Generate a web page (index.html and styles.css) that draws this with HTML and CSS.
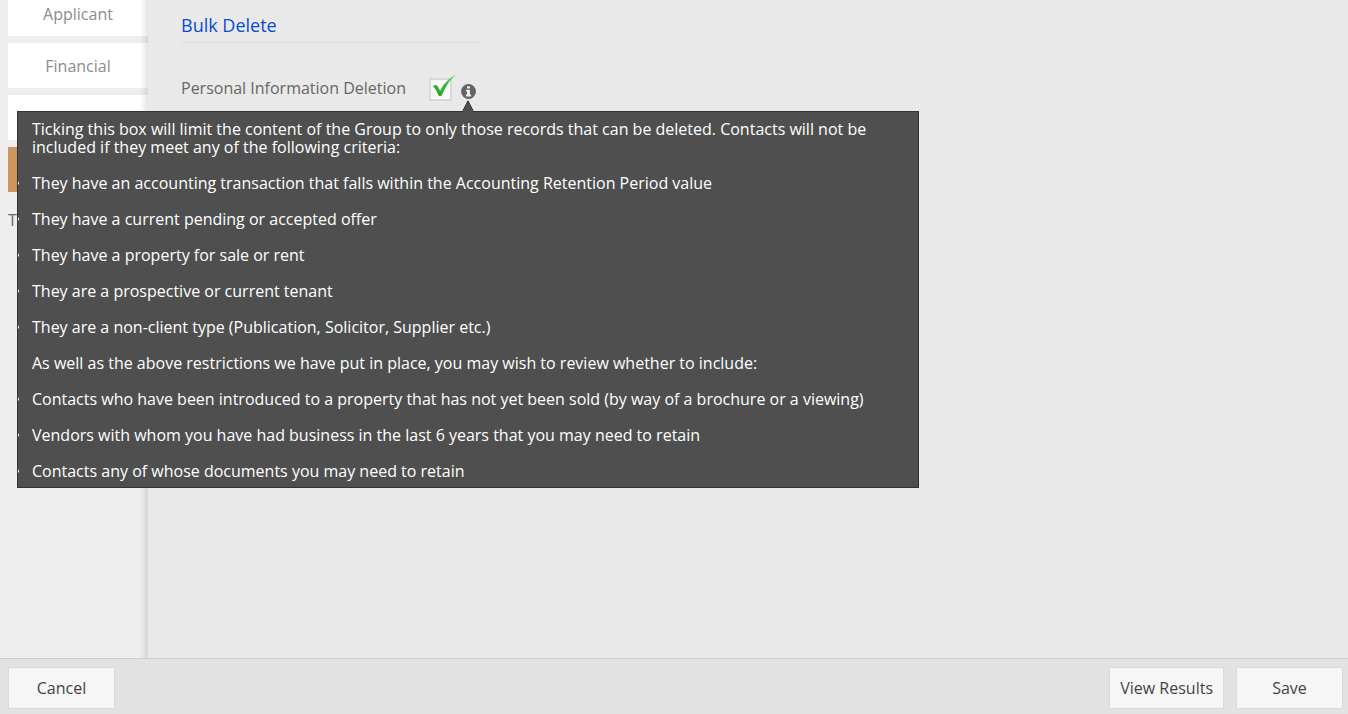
FILE: index.html
```html
<!DOCTYPE html>
<html lang="en">
<head>
    <meta charset="UTF-8">
    <meta name="viewport" content="width=device-width, initial-scale=1.0">
    <title>Bulk Delete</title>
    <link rel="stylesheet" href="styles.css">
</head>
<body>
    <div class="workspace">
        <!-- Side tabs -->
        <nav class="sidebar">
            <button type="button" class="tab">Applicant</button>
            <button type="button" class="tab">Financial</button>
            <button type="button" class="tab"></button>
            <button type="button" class="tab active"></button>
            <p class="sidebar-note">To</p>
        </nav>

        <!-- Bulk Delete form -->
        <main class="content">
            <h1>Bulk Delete</h1>
            <div class="field">
                <label for="deletion">Personal Information Deletion</label>
                <span class="checkbox">
                    <input type="checkbox" id="deletion" aria-describedby="deletion-help" checked>
                    <svg class="tick" width="26" height="28" viewBox="0 0 26 28">
                        <defs>
                            <linearGradient id="tick-fill" x1="0" y1="1" x2="1" y2="0">
                                <stop offset="0" stop-color="#1fa51f"/>
                                <stop offset="0.5" stop-color="#36b834"/>
                                <stop offset="1" stop-color="#7fd47c"/>
                            </linearGradient>
                        </defs>
                        <path d="M3 12.5 C4.5 11 6.5 10.5 7.5 12 L10.2 16.8 C14 9.5 19 4 25.8 0.8 C20 6 15.5 12.5 12 21 C11 22.8 9.2 22.8 8.2 21 C7 17.5 5.5 14.5 3 12.5 Z" fill="url(#tick-fill)"/>
                    </svg>
                </span>
                <span class="info">
                    <svg width="15" height="15" viewBox="0 0 15 15">
                        <circle cx="7.5" cy="7.5" r="7.4" fill="#636363"/>
                        <path d="M6.1 2.3h2.8v2.2H6.1z M5 5.8h3.9v4.8h1.2v1.8H4.9v-1.8h1.2V7.5H5z" fill="#f2f2f2"/>
                    </svg>
                    <div class="tooltip" id="deletion-help" role="tooltip">
                        <svg class="arrow" width="12" height="12" viewBox="0 0 12 12">
                            <path d="M0.5 12 L6 0.8 L11.5 12 Z" fill="#4f4f4f"/>
                            <path d="M0.5 11.5 L6 0.8 L11.5 11.5" fill="none" stroke="#333"/>
                        </svg>
                        <div class="tooltip-body">
                            <p>Ticking this box will limit the content of the Group to only those records that can be deleted. Contacts will not be included if they meet any of the following criteria:</p>
                            <ul>
                                <li>They have an accounting transaction that falls within the Accounting Retention Period value</li>
                                <li>They have a current pending or accepted offer</li>
                                <li>They have a property for sale or rent</li>
                                <li>They are a prospective or current tenant</li>
                                <li>They are a non-client type (Publication, Solicitor, Supplier etc.)</li>
                            </ul>
                            <p>As well as the above restrictions we have put in place, you may wish to review whether to include:</p>
                            <ul>
                                <li>Contacts who have been introduced to a property that has not yet been sold (by way of a brochure or a viewing)</li>
                                <li>Vendors with whom you have had business in the last 6 years that you may need to retain</li>
                                <li>Contacts any of whose documents you may need to retain</li>
                            </ul>
                        </div>
                    </div>
                </span>
            </div>
        </main>
    </div>

    <!-- Action bar -->
    <footer>
        <button type="button" class="btn">Cancel</button>
        <div class="actions">
            <button type="button" class="btn">View Results</button>
            <button type="button" class="btn">Save</button>
        </div>
    </footer>
</body>
</html>
```
FILE: styles.css
```css
* {
    margin: 0;
    padding: 0;
    box-sizing: border-box;
}

body {
    font-family: "Segoe UI", "Open Sans", "Noto Sans", sans-serif;
    font-size: 16px;
    display: flex;
    flex-direction: column;
    height: 100vh;
    overflow: hidden;
    background: #e9e9e9;
    color: #666;
}

button {
    font: inherit;
}

.workspace {
    display: flex;
    flex: 1;
    min-height: 0;
}

/* Side tabs */
.sidebar {
    display: flex;
    flex-direction: column;
    gap: 7px;
    width: 148px;
    padding-left: 8px;
    overflow: hidden;
    background: #eee;
    position: relative;
}

/* Inner shadow along the right edge */
.sidebar::after {
    content: "";
    position: absolute;
    top: 0;
    right: 0;
    bottom: 0;
    width: 8px;
    background: linear-gradient(to right, rgba(0, 0, 0, 0), rgba(0, 0, 0, 0.1));
}

.tab {
    flex: none;
    height: 45px;
    border: none;
    background: #fff;
    color: #8c8c8c;
}

/* The list is scrolled a little past its first tab */
.tab:first-child {
    margin-top: -9px;
}

.tab.active {
    background: #cb955b;
}

.sidebar-note {
    margin-top: 9px;
    line-height: 24px;
}

/* Form */
.content {
    flex: 1;
    padding: 8px 33px;
}

h1 {
    max-width: 299px;
    border-bottom: 1px solid #dedede;
    font-size: 18px;
    font-weight: 400;
    line-height: 34px;
    color: #0a4bd0;
}

.field {
    display: flex;
    align-items: center;
    margin-top: 32px;
    height: 28px;
}

.field label {
    width: 248px;
    padding-bottom: 2px;
}

.checkbox {
    position: relative;
    height: 23px;
}

.checkbox input {
    appearance: none;
    display: block;
    width: 23px;
    height: 23px;
    border: 2px solid #d8d8d8;
    background: #fafafa;
}

.tick {
    position: absolute;
    left: 1px;
    bottom: -1px;
    pointer-events: none;
}

.info {
    position: relative;
    height: 15px;
    margin: 5px 0 0 9px;
}

.info > svg {
    display: block;
}

/* Tooltip */
.tooltip {
    position: absolute;
    top: 27px;
    left: -444px;
    width: 902px;
    color: #fff;
    z-index: 1;
}

.arrow {
    position: absolute;
    top: -11px;
    left: 445px;
}

.tooltip-body {
    display: flex;
    flex-direction: column;
    gap: 18px;
    padding: 8px 14px 7px;
    border: 1px solid #333;
    background: #4f4f4f;
    line-height: 18px;
    overflow: hidden;
}

.tooltip ul {
    display: flex;
    flex-direction: column;
    gap: 18px;
    list-style: none;
}

.tooltip li {
    position: relative;
}

/* Bullets hang over the edge of the box */
.tooltip li::before {
    content: "";
    position: absolute;
    top: 7px;
    left: -17px;
    width: 4px;
    height: 4px;
    border-radius: 2px;
    background: #fff;
}

/* Action bar */
footer {
    display: flex;
    justify-content: space-between;
    padding: 8px 5px 5px 8px;
    border-top: 1px solid #ccc;
    background: #e2e2e2;
}

.actions {
    display: flex;
    gap: 12px;
}

.btn {
    min-width: 107px;
    height: 42px;
    padding: 0 10px;
    border: 1px solid #dadada;
    background: #f6f6f6;
    color: #444;
}
```
